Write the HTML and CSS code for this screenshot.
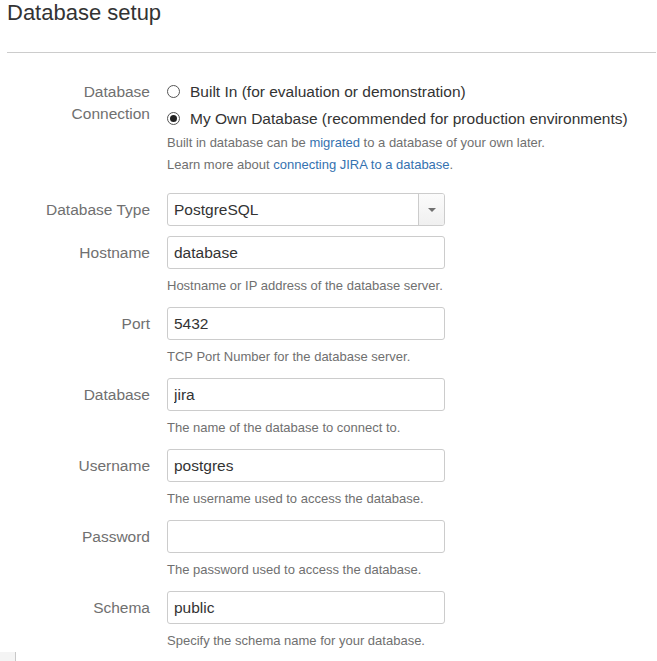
FILE: index.html
```html
<!DOCTYPE html>
<html lang="en">
<head>
<meta charset="utf-8">
<title>Database setup</title>
<link rel="stylesheet" href="styles.css">
</head>
<body>
<div class="page">
  <header class="head">
    <h1 class="title">Database setup</h1>
  </header>
  <form class="form">
    <div class="row row-conn">
      <div class="label label-multi">Database<br>Connection</div>
      <div class="field">
        <label class="radio"><span class="dot"></span>Built In (for evaluation or demonstration)</label>
        <label class="radio"><span class="dot dot-on"></span>My Own Database (recommended for production environments)</label>
        <p class="desc">Built in database can be <a class="link" href="#">migrated</a> to a database of your own later.</p>
        <p class="desc">Learn more about <a class="link" href="#">connecting JIRA to a database</a>.</p>
      </div>
    </div>
    <div class="row">
      <div class="label">Database Type</div>
      <div class="field">
        <div class="select">
          <span class="select-value">PostgreSQL</span>
          <span class="select-btn"><span class="arrow"></span></span>
        </div>
      </div>
    </div>
    <div class="row">
      <div class="label">Hostname</div>
      <div class="field">
        <input class="input" type="text" value="database">
        <p class="help">Hostname or IP address of the database server.</p>
      </div>
    </div>
    <div class="row">
      <div class="label">Port</div>
      <div class="field">
        <input class="input" type="text" value="5432">
        <p class="help">TCP Port Number for the database server.</p>
      </div>
    </div>
    <div class="row">
      <div class="label">Database</div>
      <div class="field">
        <input class="input" type="text" value="jira">
        <p class="help">The name of the database to connect to.</p>
      </div>
    </div>
    <div class="row">
      <div class="label">Username</div>
      <div class="field">
        <input class="input" type="text" value="postgres">
        <p class="help">The username used to access the database.</p>
      </div>
    </div>
    <div class="row">
      <div class="label">Password</div>
      <div class="field">
        <input class="input" type="password" value="">
        <p class="help">The password used to access the database.</p>
      </div>
    </div>
    <div class="row row-last">
      <div class="label">Schema</div>
      <div class="field">
        <input class="input" type="text" value="public">
        <p class="help">Specify the schema name for your database.</p>
      </div>
    </div>
  </form>
  <div class="corner"></div>
</div>
</body>
</html>
```
FILE: styles.css
```css
html, body {
  margin: 0;
  padding: 0;
  background: #fff;
}
body {
  font-family: "Liberation Sans", Arial, sans-serif;
  color: #333;
  overflow: hidden;
}
.page {
  width: 657px;
}
.head {
  margin: 0 1px 0 7px;
  padding-bottom: 26px;
  border-bottom: 1px solid #cccccc;
}
.title {
  margin: 0;
  font-size: 22px;
  line-height: 26px;
  font-weight: normal;
  color: #333;
}
.form {
  margin: 0 0 0 7px;
  padding-top: 25px;
}
.row {
  display: grid;
  grid-template-columns: 143px 278px;
  column-gap: 17px;
  margin-bottom: 10px;
}
.row-conn {
  grid-template-columns: 143px 480px;
  margin-bottom: 17px;
}
.row-last {
  margin-bottom: 0;
}
.label {
  text-align: right;
  font-size: 15.5px;
  line-height: 33px;
  color: #707070;
}
.label-multi {
  line-height: 22px;
  padding-top: 3px;
}
.field {
  display: flex;
  flex-direction: column;
}
.radio {
  display: flex;
  align-items: center;
  height: 27px;
  font-size: 15.5px;
  color: #333;
  white-space: nowrap;
}
.dot {
  box-sizing: border-box;
  width: 13px;
  height: 13px;
  border: 1px solid #555;
  border-radius: 50%;
  background: #fff;
  margin-right: 10px;
  flex: none;
  display: flex;
  align-items: center;
  justify-content: center;
}
.dot-on::after {
  content: "";
  width: 7px;
  height: 7px;
  border-radius: 50%;
  background: #222;
}
.desc {
  margin: 0;
  font-size: 13px;
  line-height: 22px;
  color: #707070;
  white-space: nowrap;
}
.link {
  color: #3572b0;
  text-decoration: none;
}
.select {
  box-sizing: border-box;
  display: flex;
  height: 33px;
  border: 1px solid #cccccc;
  border-radius: 3px;
  background: #fff;
  overflow: hidden;
}
.select-value {
  flex: 1;
  padding-left: 6px;
  font-size: 15.5px;
  line-height: 31px;
  color: #333;
}
.select-btn {
  width: 25px;
  border-left: 1px solid #cccccc;
  background: linear-gradient(#fbfbfb, #f0f0f0);
  display: flex;
  align-items: center;
  justify-content: center;
}
.arrow {
  width: 0;
  height: 0;
  border-left: 4px solid transparent;
  border-right: 4px solid transparent;
  border-top: 4px solid #707070;
}
.input {
  box-sizing: border-box;
  width: 278px;
  height: 33px;
  margin: 0;
  padding: 0 6px;
  border: 1px solid #cccccc;
  border-radius: 3px;
  background: #fff;
  font-family: "Liberation Sans", Arial, sans-serif;
  font-size: 15.5px;
  color: #333;
  outline: none;
}
.help {
  margin: 8px 0 2px;
  font-size: 13px;
  line-height: 18px;
  color: #707070;
  white-space: nowrap;
}
.corner {
  box-sizing: border-box;
  width: 16px;
  height: 10px;
  background: #f4f4f4;
  border-right: 1px solid #c8c8c8;
}
```
